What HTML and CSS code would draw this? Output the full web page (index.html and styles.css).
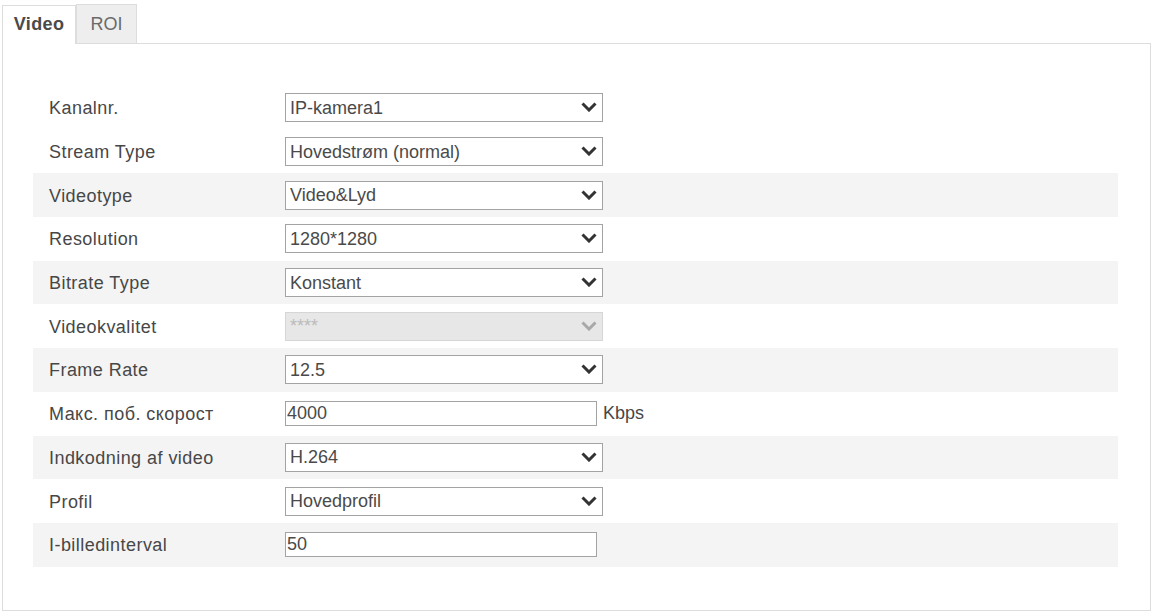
FILE: index.html
```html
<!DOCTYPE html>
<html lang="da">
<head>
    <meta charset="UTF-8">
    <title>Video</title>
    <link rel="stylesheet" href="styles.css">
</head>
<body>
    <div class="page">
        <!-- Tabs -->
        <div class="tabs">
            <div class="tab active">Video</div>
            <div class="tab">ROI</div>
        </div>

        <div class="panel">
            <div class="form">
                <div class="row">
                    <label class="label">Kanalnr.</label>
                    <span class="select-wrap">
                        <select class="select"><option>IP-kamera1</option></select>
                        <svg class="chevron" viewBox="0 0 16 10"><path d="M1.5 1.5 L8 8 L14.5 1.5"/></svg>
                    </span>
                </div>
                <div class="row">
                    <label class="label">Stream Type</label>
                    <span class="select-wrap">
                        <select class="select"><option>Hovedstrøm (normal)</option></select>
                        <svg class="chevron" viewBox="0 0 16 10"><path d="M1.5 1.5 L8 8 L14.5 1.5"/></svg>
                    </span>
                </div>
                <div class="row">
                    <label class="label">Videotype</label>
                    <span class="select-wrap">
                        <select class="select"><option>Video&amp;Lyd</option></select>
                        <svg class="chevron" viewBox="0 0 16 10"><path d="M1.5 1.5 L8 8 L14.5 1.5"/></svg>
                    </span>
                </div>
                <div class="row">
                    <label class="label">Resolution</label>
                    <span class="select-wrap">
                        <select class="select"><option>1280*1280</option></select>
                        <svg class="chevron" viewBox="0 0 16 10"><path d="M1.5 1.5 L8 8 L14.5 1.5"/></svg>
                    </span>
                </div>
                <div class="row">
                    <label class="label">Bitrate Type</label>
                    <span class="select-wrap">
                        <select class="select"><option>Konstant</option></select>
                        <svg class="chevron" viewBox="0 0 16 10"><path d="M1.5 1.5 L8 8 L14.5 1.5"/></svg>
                    </span>
                </div>
                <div class="row">
                    <label class="label">Videokvalitet</label>
                    <span class="select-wrap disabled">
                        <select class="select" disabled><option>****</option></select>
                        <svg class="chevron" viewBox="0 0 16 10"><path d="M1.5 1.5 L8 8 L14.5 1.5"/></svg>
                    </span>
                </div>
                <div class="row">
                    <label class="label">Frame Rate</label>
                    <span class="select-wrap">
                        <select class="select"><option>12.5</option></select>
                        <svg class="chevron" viewBox="0 0 16 10"><path d="M1.5 1.5 L8 8 L14.5 1.5"/></svg>
                    </span>
                </div>
                <div class="row">
                    <label class="label">Макс. поб. скорост</label>
                    <input class="text-input" type="text" value="4000">
                    <span class="unit">Kbps</span>
                </div>
                <div class="row">
                    <label class="label">Indkodning af video</label>
                    <span class="select-wrap">
                        <select class="select"><option>H.264</option></select>
                        <svg class="chevron" viewBox="0 0 16 10"><path d="M1.5 1.5 L8 8 L14.5 1.5"/></svg>
                    </span>
                </div>
                <div class="row">
                    <label class="label">Profil</label>
                    <span class="select-wrap">
                        <select class="select"><option>Hovedprofil</option></select>
                        <svg class="chevron" viewBox="0 0 16 10"><path d="M1.5 1.5 L8 8 L14.5 1.5"/></svg>
                    </span>
                </div>
                <div class="row">
                    <label class="label">I-billedinterval</label>
                    <input class="text-input" type="text" value="50">
                </div>
            </div>
        </div>
    </div>
</body>
</html>
```

FILE: styles.css
```css
/* General */
body {
    margin: 0;
    font-family: "Liberation Sans", Arial, sans-serif;
    font-size: 18px;
    color: #474747;
    background-color: #fff;
}

.page {
    padding: 4px 3px 0 2px;
}

/* Tabs */
.tabs {
    display: flex;
    align-items: flex-end;
    height: 39px;
}

.tab {
    height: 39px;
    box-sizing: border-box;
    padding-top: 9px;
    text-align: center;
    border: 1px solid #ddd;
    border-bottom: none;
    background-color: #eee; /* inactive tab */
    color: #6a6a6a;
    width: 61px;
}

.tab.active {
    height: 39px;
    width: 74px;
    margin-bottom: -1px;
    background-color: #fff;
    color: #4a4a4a;
    font-weight: bold;
    letter-spacing: 0.4px;
    position: relative;
    padding-top: 8px;
}

/* Panel */
.panel {
    border: 1px solid #ddd;
    height: 568px;
    box-sizing: border-box;
    padding: 42px 32px 0 30px;
}

/* Form rows */
.row {
    display: flex;
    align-items: center;
    height: 43.7px;
    padding-left: 16px;
}

.row:nth-child(3),
.row:nth-child(5),
.row:nth-child(7),
.row:nth-child(9),
.row:nth-child(11) {
    background-color: #f4f4f4; /* stripe */
}

.label {
    width: 236px;
    flex-shrink: 0;
    letter-spacing: 0.45px;
    padding-top: 2px;
}

/* Select boxes */
.select-wrap {
    position: relative;
    display: inline-block;
    width: 318px;
    height: 29px;
}

.select {
    appearance: none;
    -webkit-appearance: none;
    width: 100%;
    height: 100%;
    margin: 0;
    box-sizing: border-box;
    border: 1px solid #a3a3a3;
    border-radius: 0;
    background-color: #fff;
    padding: 0 0 0 4px;
    font-family: inherit;
    font-size: 18px;
    color: #4a4a4a;
}

.chevron {
    position: absolute;
    right: 6px;
    top: 9px;
    width: 16px;
    height: 10px;
    fill: none;
    stroke: #333;
    stroke-width: 3;
    pointer-events: none;
}

.select-wrap.disabled .select {
    background-color: #e7e7e7;
    border-color: #d6d6d6;
    color: #bbb;
    opacity: 1;
}

.select-wrap.disabled .chevron {
    stroke: #a8a8a8;
}

/* Text inputs */
.text-input {
    width: 312px;
    height: 25px;
    margin: 0;
    box-sizing: border-box;
    border: 1px solid #a3a3a3;
    border-radius: 0;
    padding: 0 1px;
    font-family: inherit;
    font-size: 18px;
    color: #4a4a4a;
}

.unit {
    margin-left: 6px;
}
```
